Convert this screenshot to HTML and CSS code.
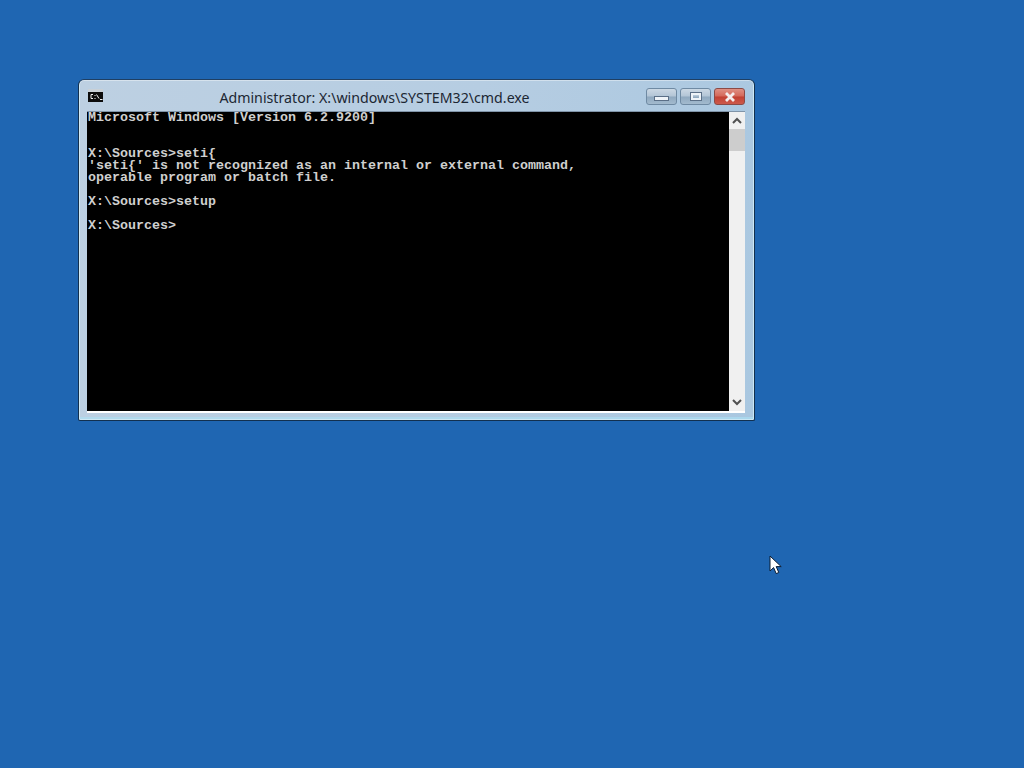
FILE: index.html
```html
<!DOCTYPE html>
<html lang="en">
<head>
<meta charset="utf-8">
<title>cmd.exe</title>
<link rel="stylesheet" href="styles.css">
</head>
<body>
<main class="desktop">
  <section class="window">
    <header class="titlebar">
      <svg class="app-icon" width="15" height="13" viewBox="0 0 15 13" aria-hidden="true">
        <rect width="15" height="13" fill="#0c0c0c"/>
        <rect width="15" height="3" fill="#c9d0d6"/>
        <path d="M5 5.5H3v4h2M7 6v1M7 9v1M8.5 5.5l2.5 4M12 10.5h2.5" fill="none" stroke="#f0f0f0" stroke-width="1"/>
      </svg>
      <h1 class="title">Administrator: X:\windows\SYSTEM32\cmd.exe</h1>
      <div class="controls">
        <div class="ctl ctl-min"><span class="min-glyph"></span></div>
        <div class="ctl ctl-max"><span class="max-glyph"></span></div>
        <div class="ctl ctl-close">
          <svg width="14" height="10" viewBox="0 0 14 10" aria-hidden="true"><path d="M3 1l8 8M11 1l-8 8" stroke="#f4eeee" stroke-width="2.8" fill="none"/></svg>
        </div>
      </div>
    </header>
    <div class="client">
      <pre class="console">Microsoft Windows [Version 6.2.9200]


X:\Sources&gt;seti{
'seti{' is not recognized as an internal or external command,
operable program or batch file.

X:\Sources&gt;setup

X:\Sources&gt;</pre>
      <div class="scrollbar">
        <div class="arrow">
          <svg width="10" height="7" viewBox="0 0 10 7" aria-hidden="true"><path d="M1 6l4-4 4 4" fill="none" stroke="#505050" stroke-width="2"/></svg>
        </div>
        <div class="thumb"></div>
        <div class="track"></div>
        <div class="arrow">
          <svg width="10" height="7" viewBox="0 0 10 7" aria-hidden="true"><path d="M1 1l4 4 4-4" fill="none" stroke="#505050" stroke-width="2"/></svg>
        </div>
      </div>
    </div>
  </section>
  <svg class="cursor" width="14" height="21" viewBox="0 0 14 21" aria-hidden="true">
    <path d="M1 1v15l3.6-3.4 2.6 6 2.6-1.1-2.6-5.9h5z" fill="#fff" stroke="#0b1c33" stroke-width="1"/>
  </svg>
</main>
</body>
</html>
```
FILE: styles.css
```css
html, body {
  margin: 0;
  height: 100%;
}
.desktop {
  position: relative;
  width: 1024px;
  height: 768px;
  overflow: hidden;
  background: #1f66b2;
}
.window {
  position: absolute;
  left: 78px;
  top: 79px;
  width: 677px;
  height: 342px;
  box-sizing: border-box;
  border: 1px solid #12304f;
  border-top-color: #1f3f63;
  border-radius: 6px 6px 2px 2px;
  background: linear-gradient(100deg, #bdd0e2 0, #b6cde2 55%, #a9c7e0 100%);
  box-shadow: inset 0 0 0 1px rgba(255,255,255,.4), inset 0 -2px 0 1px rgba(170,225,245,.6);
  display: flex;
  flex-direction: column;
  padding: 0 8px 7px 8px;
}
.titlebar {
  height: 31px;
  flex: none;
  display: flex;
  align-items: flex-start;
}
.app-icon {
  margin: 9px 0 0 1px;
  flex: none;
}
.title {
  flex: 1;
  margin: 8px 0 0;
  text-align: center;
  font: 400 14.2px/20px "Noto Sans", "Open Sans", sans-serif;
  color: #1c2733;
}
.controls {
  display: flex;
  gap: 3px;
  margin-top: 8px;
  margin-right: 1px;
}
.ctl {
  width: 31px;
  height: 17px;
  box-sizing: border-box;
  border: 1px solid #6f8aa3;
  border-radius: 3px;
  display: flex;
  align-items: center;
  justify-content: center;
  background: linear-gradient(180deg, #cbd8e4 0, #b3c5d6 48%, #8fa8bf 52%, #a3bace 100%);
}
.ctl-close {
  border-color: #8c4a46;
  background: linear-gradient(180deg, #df9083 0, #d4685a 48%, #c24032 52%, #cd5a4c 100%);
}
.min-glyph {
  display: block;
  width: 13px;
  height: 3px;
  margin-top: 4px;
  background: #eef3f8;
  border: 1px solid #5b6f87;
}
.max-glyph {
  display: block;
  width: 6px;
  height: 3px;
  border: 2px solid #eef3f8;
  outline: 1px solid #5b6f87;
}
.client {
  flex: 1;
  min-height: 0;
  display: flex;
  margin-right: 1px;
  border-top: 1px solid #8094a8;
  border-bottom: 2px solid #fff;
}
.console {
  flex: 1;
  margin: 0;
  padding-left: 1px;
  background: #000;
  color: #cfcfcf;
  font: 700 13.33px/12px "Liberation Mono", monospace;
  white-space: pre;
}
.scrollbar {
  width: 16px;
  flex: none;
  display: flex;
  flex-direction: column;
  background: #f0f0f0;
}
.arrow {
  height: 17px;
  flex: none;
  display: flex;
  align-items: center;
  justify-content: center;
}
.thumb {
  height: 22px;
  flex: none;
  background: #cdcdcd;
}
.track {
  flex: 1;
}
.cursor {
  position: absolute;
  left: 769px;
  top: 555px;
}
```
